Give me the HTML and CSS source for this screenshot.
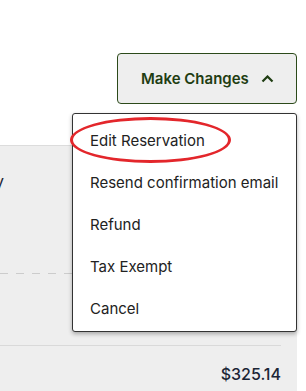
FILE: index.html
```html
<!doctype html>
<html lang="en">

<head>
  <meta charset="UTF-8" />
  <meta name="viewport" content="width=device-width, initial-scale=1" />
  <title>Reservation</title>
  <link rel="stylesheet" href="styles.css">
</head>

<body>
  <div class="page">
    <div class="header">
      <button class="changes-button">
        <span>Make Changes</span>
        <svg class="chevron" width="13" height="8" viewBox="0 0 13 8">
          <path d="M1.5 6.5 L6.5 1.5 L11.5 6.5" fill="none" stroke="#1f3d12" stroke-width="2.2" />
        </svg>
      </button>
    </div>

    <div class="panel">
      <div class="summary-row">
        <span class="cut-text">y</span>
      </div>
      <div class="dashed-line"></div>
      <div class="detail-row"></div>
      <div class="solid-line"></div>
      <div class="price-row">$325.14</div>
    </div>

    <!-- Dropdown menu -->
    <ul class="menu">
      <li class="menu-item">Edit Reservation</li>
      <li class="menu-item">Resend confirmation email</li>
      <li class="menu-item">Refund</li>
      <li class="menu-item">Tax Exempt</li>
      <li class="menu-item">Cancel</li>
    </ul>
    <div class="highlight"></div>
  </div>
</body>

</html>
```

FILE: styles.css
```css
body {
  margin: 0;
  background-color: white;
  font-family: Inter, "Liberation Sans", Arial, sans-serif;
  color: #222;
}

.page {
  position: relative;
  width: 306px;
  height: 391px;
  overflow: hidden;
}

.header {
  display: flex;
  justify-content: flex-end;
  padding: 53px 9px 41px 0;
}

.changes-button {
  display: flex;
  align-items: center;
  gap: 12px;
  height: 51px;
  width: 180px;
  padding: 0 0 0 23px;
  background-color: #eeeeee;
  border: 1px solid #2c4a1a;
  border-radius: 4px;
  font-family: Inter, "Liberation Sans", Arial, sans-serif;
  font-size: 15px;
  font-weight: 600;
  color: #1f3d12;
  box-sizing: border-box;
}

.chevron {
  display: block;
}

.panel {
  width: 297px;
  background-color: #eeeeee;
  border-top: 1px solid #dcdcdc;
  padding-right: 16px;
  box-sizing: border-box;
  height: 260px;
}

.summary-row {
  height: 127px;
  padding-top: 25px;
  box-sizing: border-box;
  font-size: 16px;
  line-height: 20px;
}

.cut-text {
  display: inline-block;
  margin-left: -5px;
  color: #1b2535;
}

.dashed-line {
  height: 1px;
  background: repeating-linear-gradient(to right, #cccccc 0 8px, transparent 8px 16px);
}

.detail-row {
  height: 71px;
}

.solid-line {
  height: 1px;
  background-color: #d9d9d9;
}

.price-row {
  padding-top: 18px;
  text-align: right;
  font-size: 16px;
  font-weight: 500;
  line-height: 20px;
  color: #1b2535;
}

.menu {
  position: absolute;
  left: 72px;
  top: 113px;
  width: 225px;
  height: 219px;
  margin: 0;
  padding: 5px 0 2px;
  list-style: none;
  background-color: white;
  border: 1px solid #333;
  border-radius: 3px;
  box-shadow: 0 2px 4px rgba(0, 0, 0, 0.3);
  box-sizing: border-box;
}

.menu-item {
  display: flex;
  align-items: center;
  height: 42px;
  padding-left: 17px;
  font-size: 15px;
  color: #222;
}

.highlight {
  position: absolute;
  left: 70px;
  top: 117px;
  width: 161px;
  height: 46px;
  border: 3px solid #e3262b;
  border-radius: 50%;
  box-sizing: border-box;
}
```
